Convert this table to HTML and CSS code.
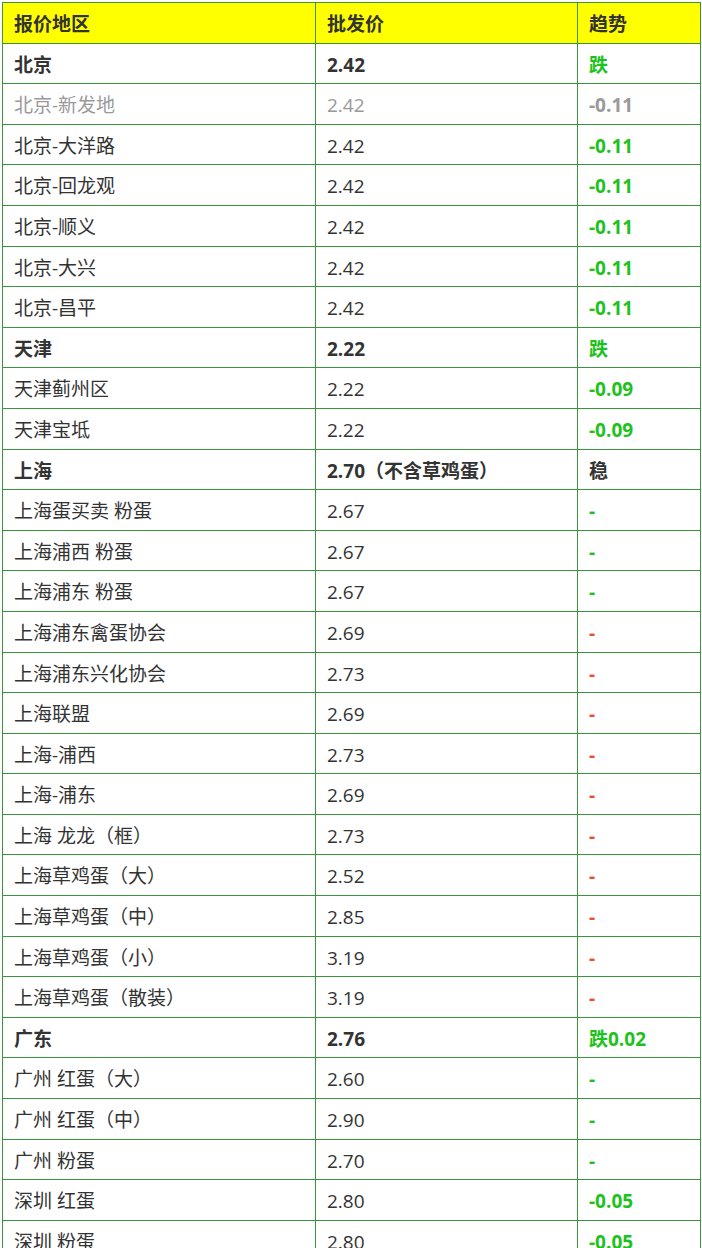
FILE: index.html
```html
<!DOCTYPE html>
<html lang="zh-CN">
<head>
<meta charset="utf-8">
<title>鸡蛋批发价</title>
<link rel="stylesheet" href="styles.css">
</head>
<body>
<table class="price-table">
  <colgroup>
    <col class="c1"><col class="c2"><col class="c3">
  </colgroup>
  <thead>
    <tr><th>报价地区</th><th>批发价</th><th>趋势</th></tr>
  </thead>
  <tbody>
    <tr class="main"><td>北京</td><td>2.42</td><td class="up">跌</td></tr>
    <tr class="muted"><td>北京-新发地</td><td>2.42</td><td class="b">-0.11</td></tr>
    <tr><td>北京-大洋路</td><td>2.42</td><td class="up b">-0.11</td></tr>
    <tr><td>北京-回龙观</td><td>2.42</td><td class="up b">-0.11</td></tr>
    <tr><td>北京-顺义</td><td>2.42</td><td class="up b">-0.11</td></tr>
    <tr><td>北京-大兴</td><td>2.42</td><td class="up b">-0.11</td></tr>
    <tr><td>北京-昌平</td><td>2.42</td><td class="up b">-0.11</td></tr>
    <tr class="main"><td>天津</td><td>2.22</td><td class="up">跌</td></tr>
    <tr><td>天津蓟州区</td><td>2.22</td><td class="up b">-0.09</td></tr>
    <tr><td>天津宝坻</td><td>2.22</td><td class="up b">-0.09</td></tr>
    <tr class="main"><td>上海</td><td>2.70（不含草鸡蛋）</td><td>稳</td></tr>
    <tr><td>上海蛋买卖 粉蛋</td><td>2.67</td><td class="up b">-</td></tr>
    <tr><td>上海浦西 粉蛋</td><td>2.67</td><td class="up b">-</td></tr>
    <tr><td>上海浦东 粉蛋</td><td>2.67</td><td class="up b">-</td></tr>
    <tr><td>上海浦东禽蛋协会</td><td>2.69</td><td class="down b">-</td></tr>
    <tr><td>上海浦东兴化协会</td><td>2.73</td><td class="down b">-</td></tr>
    <tr><td>上海联盟</td><td>2.69</td><td class="down b">-</td></tr>
    <tr><td>上海-浦西</td><td>2.73</td><td class="down b">-</td></tr>
    <tr><td>上海-浦东</td><td>2.69</td><td class="down b">-</td></tr>
    <tr><td>上海 龙龙（框）</td><td>2.73</td><td class="down b">-</td></tr>
    <tr><td>上海草鸡蛋（大）</td><td>2.52</td><td class="down b">-</td></tr>
    <tr><td>上海草鸡蛋（中）</td><td>2.85</td><td class="down b">-</td></tr>
    <tr><td>上海草鸡蛋（小）</td><td>3.19</td><td class="down b">-</td></tr>
    <tr><td>上海草鸡蛋（散装）</td><td>3.19</td><td class="down b">-</td></tr>
    <tr class="main"><td>广东</td><td>2.76</td><td class="up">跌0.02</td></tr>
    <tr><td>广州 红蛋（大）</td><td>2.60</td><td class="up b">-</td></tr>
    <tr><td>广州 红蛋（中）</td><td>2.90</td><td class="up b">-</td></tr>
    <tr><td>广州 粉蛋</td><td>2.70</td><td class="up b">-</td></tr>
    <tr><td>深圳 红蛋</td><td>2.80</td><td class="up b">-0.05</td></tr>
    <tr><td>深圳 粉蛋</td><td>2.80</td><td class="up b">-0.05</td></tr>
  </tbody>
</table>
</body>
</html>
```

FILE: styles.css
```css
html, body {
  margin: 0;
  padding: 0;
  background: #ffffff;
}

body {
  font-family: "Open Sans", "Noto Sans CJK SC", sans-serif;
  font-size: 19px;
  color: #333333;
}

.price-table {
  border-collapse: collapse;
  width: 698px;
  margin: 2px 0 0 2px;
  table-layout: fixed;
}

.c1 { width: 313px; }
.c2 { width: 262px; }
.c3 { width: 123px; }

.price-table th,
.price-table td {
  border: 1px solid #3a963a;
  padding: 8px 11px 4px;
  line-height: 27.6px;
  text-align: left;
  vertical-align: middle;
  white-space: nowrap;
}

.price-table th {
  background: #ffff00;
  font-weight: bold;
  color: #333333;
}

.main td {
  font-weight: bold;
}

.muted td {
  color: #999999;
}

.b {
  font-weight: bold;
}

.up {
  color: #1dc21d;
}

.down {
  color: #e8502a;
}
```
